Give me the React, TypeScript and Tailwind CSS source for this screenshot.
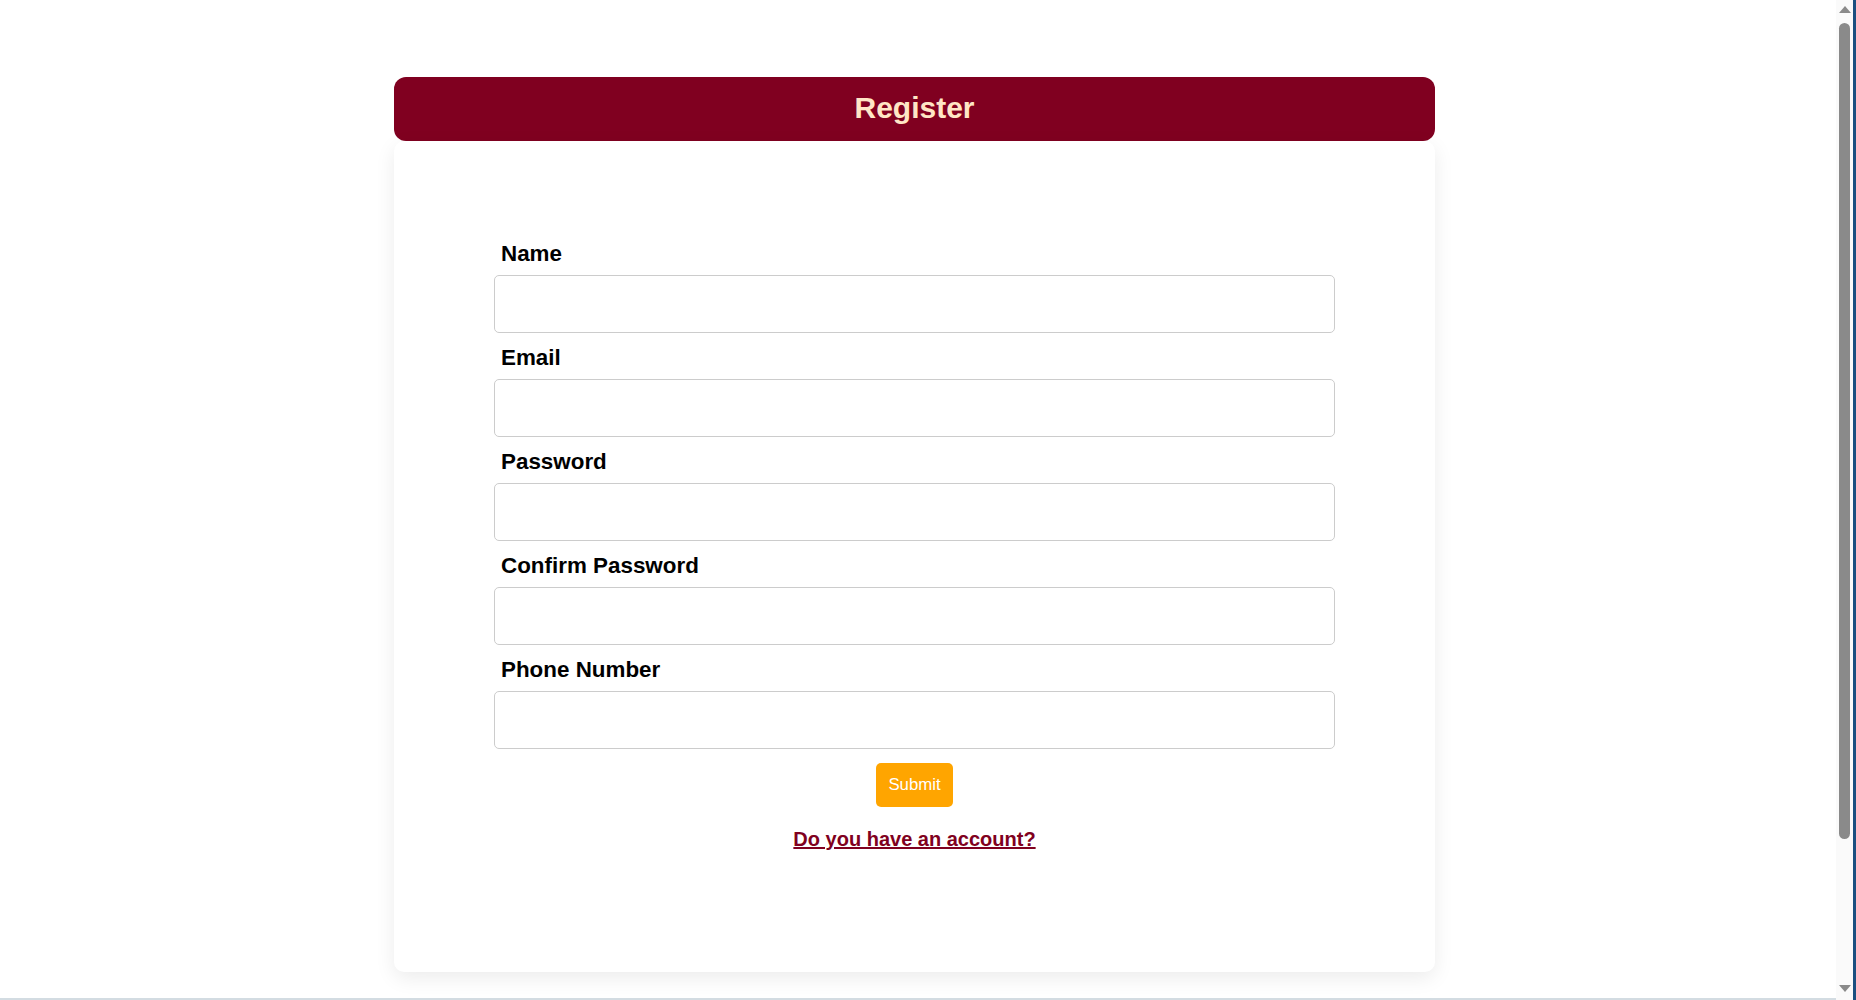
const fields = ["Name", "Email", "Password", "Confirm Password", "Phone Number"]

// Classic browser scrollbar seen in the screenshot, drawn over the right edge
function Scrollbar() {
  return (
    <div className="fixed top-0 right-0 flex h-full w-[20px] border-r-[3px] border-[#1b4f80] bg-[#fafafa]">
      <div className="flex w-[17px] flex-col items-center">
        <div className="mt-[6px] h-0 w-0 border-x-[6px] border-b-[7px] border-x-transparent border-b-[#8a8a8a]" />
        <div className="mt-[10px] h-[816px] w-[11px] rounded-full bg-[#8a8a8a]" />
        <div className="flex-1" />
        <div className="mb-[8px] h-0 w-0 border-x-[6px] border-t-[7px] border-x-transparent border-t-[#8a8a8a]" />
      </div>
    </div>
  )
}

export default function App() {
  return (
    <div className="h-screen overflow-hidden border-b-2 border-[#d3dce2] bg-white font-['Liberation_Sans',Arial,sans-serif]">
      <div className="ml-[394px] w-[1041px] pt-[77px]">
        {/* Header bar */}
        <div className="flex h-[64px] items-center justify-center rounded-[12px] bg-[#800020]">
          <h1 className="pb-[2px] text-[30px] font-bold leading-none text-[#FFE6C6]">Register</h1>
        </div>

        {/* Form card */}
        <div className="rounded-[10px] bg-white px-[100px] pt-[99px] pb-[121px] shadow-[0_6px_20px_rgba(0,0,0,0.08)]">
          <form className="flex flex-col" onSubmit={(e) => e.preventDefault()}>
            {fields.map((label) => (
              <div key={label} className="mb-[11px] flex flex-col">
                <label className="mb-[8px] pl-[7px] text-[22.4px] font-bold leading-[27px] text-black">
                  {label}
                </label>
                <input
                  type={label.includes("Password") ? "password" : "text"}
                  className="h-[58px] w-full rounded-[5px] border border-[#cccccc] bg-white px-3 text-[18px] outline-none"
                />
              </div>
            ))}
            <div className="mt-[3px] flex justify-center">
              <button
                type="submit"
                className="h-[44px] w-[77px] rounded-[5px] bg-[#FFA500] text-[16.8px] text-white"
              >
                Submit
              </button>
            </div>
            <div className="mt-[21px] flex justify-center">
              <a href="#" className="text-[20px] font-bold leading-[23px] text-[#800020] underline">
                Do you have an account?
              </a>
            </div>
          </form>
        </div>
      </div>
      <Scrollbar />
    </div>
  )
}
